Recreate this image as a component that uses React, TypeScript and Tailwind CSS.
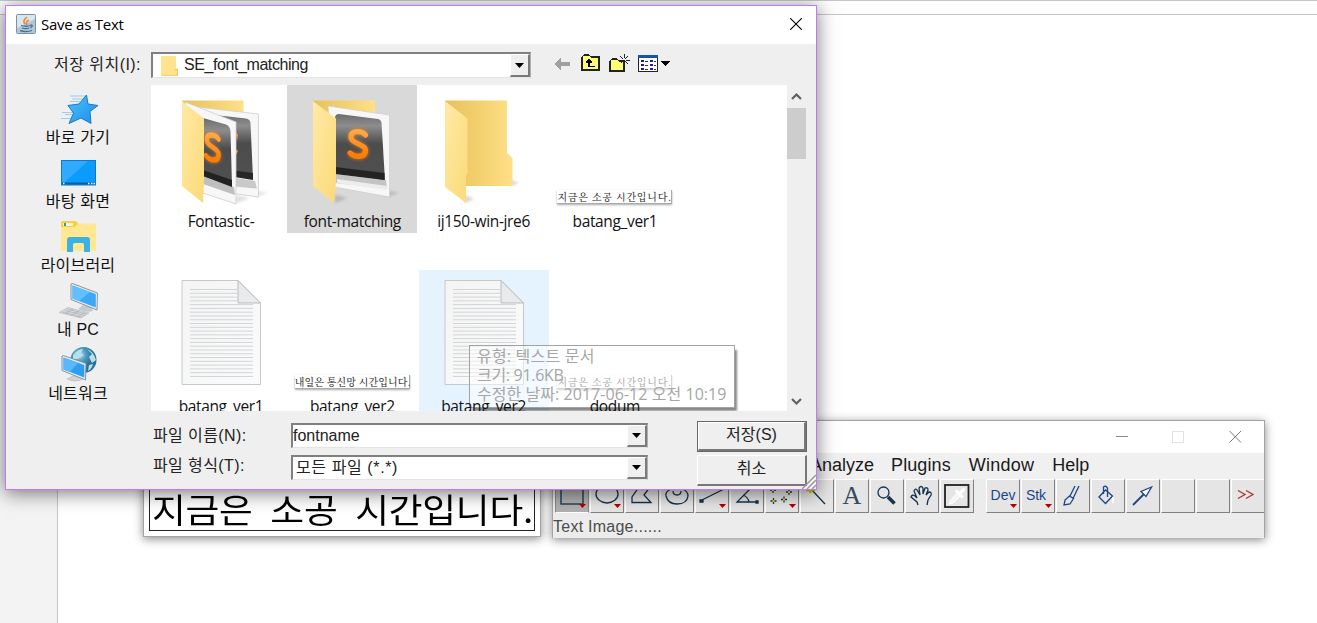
import type { ReactNode } from "react";

const GULIM = "font-['Liberation_Sans','Noto_Sans_CJK_KR',sans-serif]";
const MALGUN = "font-['Open_Sans','Noto_Sans_CJK_KR',sans-serif]";

/* ---------- sidebar icons ---------- */

function StarIcon() {
  return (
    <svg className="h-9 w-11" viewBox="0 0 44 36">
      <defs>
        <linearGradient id="star" x1="0" y1="0" x2="1" y2="1">
          <stop offset="0" stopColor="#4ec0ff" />
          <stop offset="1" stopColor="#1a8fe8" />
        </linearGradient>
      </defs>
      <path d="M14 5H29M16 8H28M14 10.500H24M6 21.500H17M9 23.500H16M5 27.500H15" stroke="#9ccdf2" strokeWidth="1" />
      <path d="M30.500 4L32 13L42 14.500L34 20.500L35 32.500L25 27L13 32.500L17.500 22L12 14.500L23 13Z" fill="url(#star)" stroke="#1d78c4" strokeWidth="1" />
    </svg>
  );
}

function DesktopIcon() {
  return (
    <svg className="h-9 w-11" viewBox="0 0 44 36">
      <rect x="5.500" y="5.500" width="34" height="24.500" fill="#0a9bfc" stroke="#1478c0" />
      <path d="M6 6H32L8 28H6Z" fill="#2eaaff" />
      <path d="M6 28.500H39" stroke="#0b5f9e" strokeWidth="2" />
      <path d="M7 28.500H8.500M32 28.500H33.500M35 28.500H36.500M37.500 28.500H39" stroke="#e8f6ff" strokeWidth="1.400" />
    </svg>
  );
}

function LibraryIcon() {
  return (
    <svg className="h-9 w-11" viewBox="0 0 44 36">
      <path d="M5 4.500Q5 2 7.500 2H19Q21.500 2 22 4.500V8H5Z" fill="#f9cf3f" />
      <rect x="7" y="4" width="10" height="3" rx="1" fill="#fff6cf" />
      <rect x="8" y="4" width="2" height="3" fill="#2e9f92" />
      <path d="M22 4.500H39Q40 4.500 40 6V31Q40 32 39 32H6Q5 32 5 31V8H18Q20 8 22 4.500Z" fill="#ffe793" />
      <path d="M11 33V21Q11 18 14 18H31Q34 18 34 21V33H28V25.500Q28 24 26.500 24H18.500Q17 24 17 25.500V33Z" fill="#3ab2e6" />
    </svg>
  );
}

function PcIcon() {
  return (
    <svg className="h-9 w-11" viewBox="0 0 44 36">
      <path d="M3 29.500L12 24.500L33 30L25 35Z" fill="#d6dadd" stroke="#b8bdc1" strokeWidth=".7" />
      <path d="M6 29L26 34M8.500 27.500L29 32.500M11 26L31 31M9 31L17 26M15 32.500L23 28M21 34L29 29.500" stroke="#a4abb1" strokeWidth=".6" />
      <path d="M22 26Q29 30 37 28L35 24L27 22Z" fill="#c3c9ce" />
      <path d="M15 1L16.500 .5L41.500 10L41 27L15 16.500Z" fill="#e7ebee" stroke="#7d8d99" strokeWidth=".9" />
      <path d="M16.500 2.500L39.800 11V24.500L16.500 15.500Z" fill="#3aa9f7" />
      <path d="M16.500 2.500L34 9L23 18L16.500 15.500Z" fill="#62c0ff" />
    </svg>
  );
}

function NetworkIcon() {
  return (
    <svg className="h-9 w-11" viewBox="0 0 44 36">
      <defs>
        <radialGradient id="globe" cx=".35" cy=".3">
          <stop offset="0" stopColor="#b4e0ee" />
          <stop offset=".5" stopColor="#4d9dc0" />
          <stop offset="1" stopColor="#2a6f96" />
        </radialGradient>
      </defs>
      <circle cx="27.500" cy="13" r="13" fill="url(#globe)" />
      <path d="M17 8Q22 2 27 2L25 6L28 8L22 12L17 12ZM31 2Q38 5 40 13L36 16L33 10L36 7ZM33 18L37 17Q36 22 32 24Z" fill="#b9dfe9" />
      <path d="M11 32Q19 36 27 32L24 29H17Z" fill="#cdd3d7" stroke="#a9b1b6" strokeWidth=".5" />
      <path d="M6 9L7.500 8.500L30 16.500L29.500 33L6 23.500Z" fill="#e7ebee" stroke="#7d8d99" strokeWidth=".9" />
      <path d="M7.500 10.500L28.300 18V30.500L7.500 22.500Z" fill="#2d9ff2" />
      <path d="M7.500 10.500L22 15.800L14 25L7.500 22.500Z" fill="#58b8fb" />
    </svg>
  );
}

/* ---------- file thumbnails, drawn in a 130x124 frame ---------- */

function Defs() {
  return (
    <svg className="absolute h-0 w-0">
      <defs>
        <linearGradient id="back" x1="0" y1="0" x2="1" y2="0">
          <stop offset="0" stopColor="#e6c25f" />
          <stop offset=".45" stopColor="#f2cf6c" />
          <stop offset="1" stopColor="#ffe088" />
        </linearGradient>
        <linearGradient id="front" x1="0" y1="0" x2="1" y2="1">
          <stop offset="0" stopColor="#ffe9a6" />
          <stop offset="1" stopColor="#fbda77" />
        </linearGradient>
        <linearGradient id="dark" x1="0" y1="0" x2="0" y2="1">
          <stop offset="0" stopColor="#6c6c6c" />
          <stop offset=".18" stopColor="#8d8d8d" />
          <stop offset=".45" stopColor="#4c4c4c" />
          <stop offset="1" stopColor="#505050" />
        </linearGradient>
        <linearGradient id="ess" x1="0" y1="0" x2="0" y2="1">
          <stop offset="0" stopColor="#ffa743" />
          <stop offset="1" stopColor="#ff7a00" />
        </linearGradient>
        <linearGradient id="paper" x1="0" y1="0" x2="1" y2="1">
          <stop offset="0" stopColor="#f4f4f4" />
          <stop offset="1" stopColor="#fafbfc" />
        </linearGradient>
        <filter id="soft" x="-40%" y="-40%" width="180%" height="180%">
          <feGaussianBlur stdDeviation="1.800" />
        </filter>
      </defs>
    </svg>
  );
}

function EssMark({ transform }: { transform: string }) {
  const d = "M7.500 -9.500C4 -14 -7 -13.500 -7 -6.500C-7 .5 7.500 -1 7.500 6C7.500 13.500 -4 14 -8 9.500";
  return (
    <g transform={transform} fill="none">
      <path d={d} stroke="#ff8a1a" strokeWidth="7" opacity=".5" filter="url(#soft)" />
      <path d={d} stroke="url(#ess)" strokeWidth="5.200" strokeLinecap="round" />
    </g>
  );
}

function StackedFolder() {
  return (
    <svg className="block h-[124px] w-[130px]" viewBox="0 0 130 124">
      <path d="M98 112L112 108L100 106ZM78 119L94 113L80 110Z" fill="#000" opacity=".12" filter="url(#soft)" />
      <path d="M26 15.500H87.500V60H26Z" fill="url(#back)" />
      <path d="M41 22L102.500 29V112L60 106Z" fill="#f7f7f7" stroke="#cfcfcf" strokeWidth=".8" />
      <path d="M60 100L101 103.500L99 96L60 90Z" fill="#c9c9c9" />
      <path d="M50 29L90 33.500Q94 34 94.500 38L97 94L62 88Z" fill="url(#dark)" />
      <path d="M66 84L97 88V95L66 90Z" fill="#282828" />
      <path d="M80 47L82 50L81 56ZM79 63L82 66L80 70Z" fill="#ff9a2b" />
      <path d="M29 17L80 37V119L47 108Z" fill="#f7f7f7" stroke="#cfcfcf" strokeWidth=".8" />
      <path d="M47 99L79 110L78 102L47 91Z" fill="#bfbfbf" />
      <path d="M47 33L70 39.500Q74 41 74.500 46L76 101L47 91Z" fill="url(#dark)" />
      <path d="M47 85L76 95V102L47 91Z" fill="#222" />
      <EssMark transform="translate(56.500 62.500) skewY(12) scale(.82 1)" />
      <path d="M26 16L48 33.500V96L47 118L26 101Z" fill="url(#front)" />
    </svg>
  );
}

function SingleFolder() {
  return (
    <svg className="block h-[124px] w-[130px]" viewBox="0 0 130 124">
      <path d="M98 112L112 108L100 106ZM48 118L60 113L48 110Z" fill="#000" opacity=".16" filter="url(#soft)" />
      <path d="M26 15.500H88V60H26Z" fill="url(#back)" />
      <path d="M41 21L102.500 30V112L47 102Z" fill="#f7f7f7" stroke="#cfcfcf" strokeWidth=".8" />
      <path d="M48 98L100 103.500L99 95L48 89Z" fill="#c4c4c4" />
      <path d="M50 98L99 105L100 101L50 94Z" fill="#ededed" />
      <path d="M48 33Q48 29 52 29L91 34Q94 34.500 94.500 38L98 95L48 88Z" fill="url(#dark)" />
      <path d="M48 82L97.500 88V95L48 89Z" fill="#232323" />
      <EssMark transform="translate(71 59) skewY(4)" />
      <path d="M26 16L49 33.500V96L47 118L26 101Z" fill="url(#front)" />
    </svg>
  );
}

function EmptyFolder() {
  return (
    <svg className="block h-[124px] w-[130px]" viewBox="0 0 130 124">
      <path d="M92 101L100 98L92 95ZM46 118L55 114L46 110Z" fill="#000" opacity=".16" filter="url(#soft)" />
      <path d="M26 15.500H87Q88 15.500 88 17V68L93.500 73V101H26Z" fill="url(#back)" />
      <path d="M26 16L48.500 33.500V88.500L47 91V118L26 102Z" fill="url(#front)" />
    </svg>
  );
}

const RULES = Array.from({ length: 24 }, (_, i) => 19.500 + i * 3.780);

function TextFile() {
  return (
    <svg className="block h-[124px] w-[130px]" viewBox="0 0 130 124">
      <path d="M26 10.500H82L104.500 33V114.500H26Z" fill="url(#paper)" stroke="#c6c8ca" />
      {RULES.map((y, i) => (
        <path key={i} d={`M34 ${y}H${i < 4 ? 81 : 97}`} stroke="#d2d4d6" strokeWidth="1" />
      ))}
      <path d="M82 10.500L104.500 33H82Z" fill="#e9eaeb" stroke="#b9bbbd" />
    </svg>
  );
}

function Strip({ text, tight, dim }: { text: string; tight?: boolean; dim?: boolean }) {
  return (
    <div className="flex h-[124px] w-[130px] items-end justify-center pb-[5px]">
      <div
        className={`h-[14px] w-[115px] border-r border-b border-[#aaa] bg-white text-center font-['Noto_Serif_CJK_KR','Noto_Sans_CJK_KR',serif] text-[10px] leading-[13px] font-medium whitespace-nowrap shadow-[0_1px_2px_#0005] ${tight ? "tracking-[0.1px]" : "tracking-[0.75px]"} ${dim ? "text-[#555]" : "text-[#333]"}`}
      >
        {text}
      </div>
    </div>
  );
}

function FileCell({ label, state, children }: { label: string; state?: "selected" | "hover"; children: ReactNode }) {
  const bg = state === "selected" ? "bg-[#d9d9d9]" : state === "hover" ? "bg-[#e5f3ff]" : "";
  return (
    <div className={`h-[148px] w-[130px] ${bg}`}>
      {children}
      <div className={`relative z-20 text-center text-[15.5px] leading-6 tracking-[-0.35px] text-[#111] ${MALGUN}`}>{label}</div>
    </div>
  );
}

/* ---------- form controls ---------- */

function DropArrow() {
  return (
    <div className="flex w-[20px] items-center justify-center border-t border-r-2 border-b-2 border-l border-t-white border-r-[#7a7a7a] border-b-[#7a7a7a] border-l-white bg-[#efefef]">
      <svg className="h-[5px] w-[9px]" viewBox="0 0 9 5">
        <path d="M0 0H9L4.500 5Z" fill="#000" />
      </svg>
    </div>
  );
}

function Combo({ className, children }: { className: string; children: ReactNode }) {
  return (
    <div className={`flex border-t-2 border-r border-b border-l-2 border-t-[#808080] border-r-[#b0b0b0] border-b-[#e4e4e4] border-l-[#808080] bg-white text-[16px] text-[#222] ${GULIM} ${className}`}>
      <div className="flex flex-1 items-center whitespace-nowrap">{children}</div>
      <DropArrow />
    </div>
  );
}

/* ---------- toolbar ---------- */

function Tool({ pressed, drop, children }: { pressed?: boolean; drop?: boolean; children?: ReactNode }) {
  return (
    <div
      className={`mr-px flex h-[34px] w-[34px] shrink-0 items-center justify-center border ${
        pressed ? "border-[#8a8a8a] border-b-white bg-[#b0b0b0]" : "border-t-white border-r-[#808080] border-b-[#808080] border-l-white bg-[#e5e5e5]"
      }`}
    >
      <svg className="h-8 w-8" viewBox="0 0 32 32" fill="none" stroke="#17324d" strokeWidth="1.300">
        {children}
        {drop && <path d="M23 24H30L26.500 28Z" fill="#b00000" stroke="none" />}
      </svg>
    </div>
  );
}

function ImageJWindow() {
  return (
    <div className="absolute top-[420px] left-[552px] flex h-[118px] w-[713px] flex-col border border-b-0 border-[#a4a4a4] bg-[#ececec] shadow-[0_2px_9px_#0007]">
      <div className="flex h-8 shrink-0 items-center justify-end gap-[44px] bg-white pr-[22px] pb-[2px]">
        <svg className="h-[13px] w-[13px]" viewBox="0 0 13 13"><path d="M1 6.500H13" stroke="#8b8b8b" /></svg>
        <svg className="h-[13px] w-[13px]" viewBox="0 0 13 13"><rect x=".5" y="1.500" width="11" height="11" fill="none" stroke="#e2e2e2" /></svg>
        <svg className="h-[13px] w-[13px]" viewBox="0 0 13 13"><path d="M.5 1L12 12.500M12 1L.5 12.500" stroke="#777" /></svg>
      </div>
      <div className="flex h-[26px] shrink-0 items-center bg-[#f0f0f0] pb-px pl-[257px] font-['Liberation_Sans',sans-serif] text-[18px] text-[#1a1a1a]">
        <span className="mr-[17px]">Analyze</span>
        <span className="mr-[18px] tracking-[0.1px]">Plugins</span>
        <span className="mr-[18px] tracking-[0.25px]">Window</span>
        <span>Help</span>
      </div>
      <div className="flex h-[34px] shrink-0 overflow-hidden pl-[2px]">
        <Tool pressed drop><rect x="5" y="6" width="22" height="18" /></Tool>
        <Tool drop><ellipse cx="16" cy="14" rx="11" ry="9" /></Tool>
        <Tool><path d="M6 22.500V17L13 7H24L18 15L25 22.500Z" /></Tool>
        <Tool><path d="M11 9Q4 11 5 16Q7 24 16 24Q26 24 27 16Q27 11 21 9M12 11Q12 15 16 15Q20 15 20 11" /></Tool>
        <Tool drop><path d="M5 20.500L28 9" /><path d="M4 20h3v2h-3z" fill="#17324d" /></Tool>
        <Tool><path d="M22 6L6 22H26M12 15Q17 17 18 22" /><path d="M25 21h2v2h-2z" fill="#17324d" /></Tool>
        <Tool drop><path d="M4 10H10M7 7V13M20 12H26M23 9V15M4.500 21H10.500M7.500 18V24M15 19.500H21M18 16.500V22.500" /><path d="M6 10h2M22 12h2M6.500 21h2M17 19.500h2" stroke="#e6e600" strokeWidth="2" /></Tool>
        <Tool><path d="M9 8L24 24" /><path d="M5 10H14M9.500 7V13" stroke="#c9bf00" strokeWidth="2.500" /></Tool>
        <Tool><text x="16" y="24" textAnchor="middle" className="font-['Liberation_Serif',serif] text-[26px]" fill="#34495e" stroke="none">A</text></Tool>
        <Tool><circle cx="12.500" cy="12.500" r="5.500" /><path d="M17 17L23.500 23.500" strokeWidth="3.500" /></Tool>
        <Tool><path d="M12 25L11 22L5 17Q6 14 9 16L11 18L8 11Q9 8 11 10L14 15L13 8Q15 5 17 8V14L19 8Q22 7 22 10L20 15L23 12Q26 12 25 15L22 20L21 25" /></Tool>
        <Tool>
          <rect x="4" y="5" width="23.500" height="22" stroke="#222" strokeWidth="1.800" />
          <path d="M8.500 24L9 21L17 12L20 15L12 23Z" stroke="#fff" strokeWidth="1" fill="#f4f4f4" />
          <path d="M15.500 11L21 16.500M19 13L22.500 9.500" stroke="#fff" strokeWidth="3" strokeLinecap="round" />
        </Tool>
        <div className="w-[11px] shrink-0" />
        <Tool drop><text x="16" y="19.500" textAnchor="middle" className="font-['Liberation_Sans',sans-serif] text-[14px]" fill="#1c4587" stroke="none">Dev</text></Tool>
        <Tool drop><text x="14" y="19.500" textAnchor="middle" className="font-['Liberation_Sans',sans-serif] text-[14px]" fill="#1c4587" stroke="none">Stk</text></Tool>
        <Tool><path d="M18 6L12.500 17M22 6L16 18.500M12.500 16L8 20L7 25L13 24L16.500 18.500Z" stroke="#1c4587" /></Tool>
        <Tool><path d="M7 17L13.500 10L20.500 16L13.500 23.500ZM11.500 14V7Q13.500 5 15.500 8V17" stroke="#1c4587" /><path d="M21 17V23" stroke="#fff" strokeWidth="1.600" /></Tool>
        <Tool><path d="M6 25L17 14" stroke="#1c4587" strokeWidth="1.800" /><path d="M24.500 7L14 11.500L19 16.500Z" fill="#fff" stroke="#1c4587" /></Tool>
        <Tool />
        <Tool />
        <Tool><path d="M6 10.500L13 14.500L6 18.500M14 10.500L21 14.500L14 18.500" stroke="#b03030" /></Tool>
      </div>
      <div className="pt-px font-['Liberation_Sans',sans-serif] text-[16px] leading-[25px] tracking-[0.25px] text-[#4c4c4c]">Text Image......</div>
    </div>
  );
}

function SaveDialog() {
  const places: [string, ReactNode][] = [
    ["바로 가기", <StarIcon />],
    ["바탕 화면", <DesktopIcon />],
    ["라이브러리", <LibraryIcon />],
    ["내 PC", <PcIcon />],
    ["네트워크", <NetworkIcon />],
  ];
  return (
    <div className="absolute top-[5px] left-[5px] flex h-[485px] w-[812px] flex-col border border-[#c07af5] bg-[#efefef] shadow-[0_3px_18px_#0008]">
      <div className="flex h-[38px] shrink-0 items-center bg-white pr-[14px] pb-[2px] pl-[10px]">
        <svg className="h-5 w-5" viewBox="0 0 20 20">
          <rect x=".5" y=".5" width="19" height="19" rx="1" fill="#dbe5ec" stroke="#7893a8" />
          <path d="M1 14L19 5V19H1Z" fill="#b3c6d4" />
          <path d="M11 3Q6 7 9 10M13 6Q9 8 11 11" fill="none" stroke="#ee8434" strokeWidth="1.600" />
          <path d="M5 11.500Q10 13 15 11.500M6 14Q10 15.300 13 14M4 16.700Q10 18.500 16 16.500M14.500 11Q18 11 14.500 14" fill="none" stroke="#456f91" strokeWidth="1.300" />
        </svg>
        <span className={`ml-[5px] flex-1 text-[15px] tracking-[-0.25px] text-black ${MALGUN}`}>Save as Text</span>
        <svg className="h-3 w-3" viewBox="0 0 12 12"><path d="M0 0L12 12M12 0L0 12" stroke="#000" strokeWidth="1.100" /></svg>
      </div>

      <div className="flex h-[41px] shrink-0 items-start pt-2">
        <div className={`w-[145px] pr-[10px] text-right text-[16px] leading-[25px] tracking-[0.45px] text-[#222] ${GULIM}`}>저장 위치(I):</div>
        <Combo className="h-[26px] w-[380px]">
          <svg className="mr-[6px] ml-2 h-5 w-[17px]" viewBox="0 0 17 20">
            <path d="M0 0H15V13L17 14V20H0Z" fill="#fbdc7d" />
            <path d="M0 0H15V19H0Z" fill="#ffe48f" />
            <path d="M14 14L17 13V20H1" fill="none" stroke="#e9c255" />
          </svg>
          <span className="pb-[2px] tracking-[-0.42px]">SE_font_matching</span>
        </Combo>
        <div className="flex pt-px pl-[23px]">
          <svg className="h-5 w-[118px]" viewBox="0 0 118 20" shapeRendering="crispEdges">
            <path d="M0 11L7 5V9H16V13H7V17Z" fill="#a0a0a0" />
            <path d="M28 4L30 2H35L37 4H45V17H28Z" fill="#ffff73" stroke="#222" strokeWidth="1.400" />
            <path d="M35 14V8M32 10L35 7L38 10M35 13.500H41" fill="none" stroke="#000" strokeWidth="1.500" />
            <path d="M56 8L58 6H63L65 8H70V18H56Z" fill="#ffff73" stroke="#222" strokeWidth="1.400" />
            <path d="M70 1V5M70 9V13M64 7H68M72 7H76M66 3L69 6M71 8L74 11M74 3L71 6M69 8L67 10" fill="none" stroke="#222" strokeWidth="1" />
            <rect x="84.500" y="2.500" width="19" height="16" fill="#fff" stroke="#222" />
            <path d="M84 3.500H104" stroke="#16569e" strokeWidth="3" />
            <path d="M87 8H90M87 12H90M87 16H90M96 8H99M96 12H99M96 16H99" stroke="#1b1ba0" strokeWidth="2" />
            <path d="M91 8H94M91 12H94M91 16H94M100 8H102M100 12H102M100 16H102" stroke="#333" strokeWidth="1" />
            <path d="M106 8H116L111 13Z" fill="#000" />
          </svg>
        </div>
      </div>

      <div className="flex h-[326px] shrink-0">
        <div className="w-[145px] pt-[6px] pr-px">
          {places.map(([name, icon]) => (
            <div key={name} className="flex h-16 flex-col items-center">
              <div className="h-9 pr-px">{icon}</div>
              <span className={`text-[16px] leading-[21px] tracking-[0.2px] text-[#111] ${GULIM}`}>{name}</span>
            </div>
          ))}
        </div>
        <div className="relative w-[636px] overflow-hidden bg-white pl-[5px]">
          <div className="grid grid-cols-[130px_130px_130px_130px] gap-x-[1.300px] gap-y-[37px]">
            <FileCell label="Fontastic-"><StackedFolder /></FileCell>
            <FileCell label="font-matching" state="selected"><SingleFolder /></FileCell>
            <FileCell label="ij150-win-jre6"><EmptyFolder /></FileCell>
            <FileCell label="batang_ver1"><Strip text="지금은 소공 시간입니다." /></FileCell>
            <FileCell label="batang_ver1"><TextFile /></FileCell>
            <FileCell label="batang_ver2"><Strip text="내일은 통신망 시간입니다." tight /></FileCell>
            <FileCell label="batang_ver2" state="hover"><TextFile /></FileCell>
            <FileCell label="dodum"><Strip text="지금은 소공 시간입니다." dim /></FileCell>
          </div>
          <div className={`absolute top-[260px] left-[318px] z-10 h-[63px] w-[266px] border border-[#a2a2a2] bg-white/50 pt-px pl-[7px] text-[16px] leading-[19px] tracking-[0.05px] whitespace-nowrap text-[#a6a6a6] shadow-[3px_4px_2px_-1px_#0007] ${MALGUN}`}>
            <div className="tracking-[0.2px]">유형: 텍스트 문서</div>
            <div className="tracking-[-0.3px]">크기: 91.6KB</div>
            <div>수정한 날짜: 2017-06-12 오전 10:19</div>
          </div>
        </div>
        <div className="flex w-[19px] flex-col items-center pt-[7px]">
          <svg className="h-[9px] w-[11px]" viewBox="0 0 11 9"><path d="M1 7L5.500 2.500L10 7" fill="none" stroke="#606060" strokeWidth="2.200" /></svg>
          <div className="mt-[7px] h-[51px] w-[19px] bg-[#cdcdcd]" />
          <svg className="mt-auto mb-[5px] h-[9px] w-[11px]" viewBox="0 0 11 9"><path d="M1 2L5.500 6.500L10 2" fill="none" stroke="#606060" strokeWidth="2.200" /></svg>
        </div>
      </div>

      <div className={`relative flex flex-1 pt-[10px] text-[16px] text-[#222] ${GULIM}`}>
        <div className="w-[285px] pl-[147px] leading-[30px] tracking-[0.4px]">
          <div>파일 이름(N):</div>
          <div>파일 형식(T):</div>
        </div>
        <div className="flex w-[357px] flex-col gap-[7px] pt-[2px]">
          <Combo className="h-[25px]">fontname</Combo>
          <Combo className="h-[25px]"><span className="pl-[3px] tracking-[0.6px]">모든 파일 (*.*)</span></Combo>
        </div>
        <div className="ml-[49px] flex w-[110px] flex-col gap-[3px] text-center leading-[24px]">
          <div className="h-[31px] border border-[#666] bg-[#efefef]">
            <div className="h-[29px] border-t border-r-2 border-b-2 border-l border-t-white border-r-[#777] border-b-[#777] border-l-white">저장(S)</div>
          </div>
          <div className="h-[31px] border-t border-r-2 border-b-2 border-l border-t-white border-r-[#777] border-b-[#777] border-l-white leading-[25px]">취소</div>
        </div>
        <svg className="absolute right-0 bottom-0 h-[14px] w-[14px]" viewBox="0 0 14 14">
          <path d="M0 14L14 0M5 14L14 5M10 14L14 10" stroke="#9a9a9a" strokeWidth="1.500" />
          <path d="M2.500 14L14 2.500M7.500 14L14 7.500" stroke="#fff" />
        </svg>
      </div>
    </div>
  );
}

export default function App() {
  return (
    <div className="relative flex h-[623px] w-[1317px] flex-col overflow-hidden bg-white">
      <Defs />
      <div className="h-[15px] border-t border-b border-t-[#c6c6c6] border-b-[#c6c6c6] bg-[#fdfdfd]" />
      <div className="w-[58px] flex-1 border-r border-[#c6c6c6] bg-[#f3f3f3]" />

      <div className="absolute top-[440px] left-[143px] h-[97px] w-[398px] border border-[#a4a4a4] bg-white p-[5px] shadow-[0_2px_9px_#0007]">
        <div className="flex h-full items-end justify-center border border-[#222]">
          <span className="origin-bottom scale-x-[1.080] font-['Noto_Sans_CJK_KR',sans-serif] text-[34px] leading-[42px] font-normal tracking-[-0.2px] whitespace-nowrap text-black [word-spacing:9px]">
            지금은 소공 시간입니다.
          </span>
        </div>
      </div>
      <ImageJWindow />
      <SaveDialog />
    </div>
  );
}
